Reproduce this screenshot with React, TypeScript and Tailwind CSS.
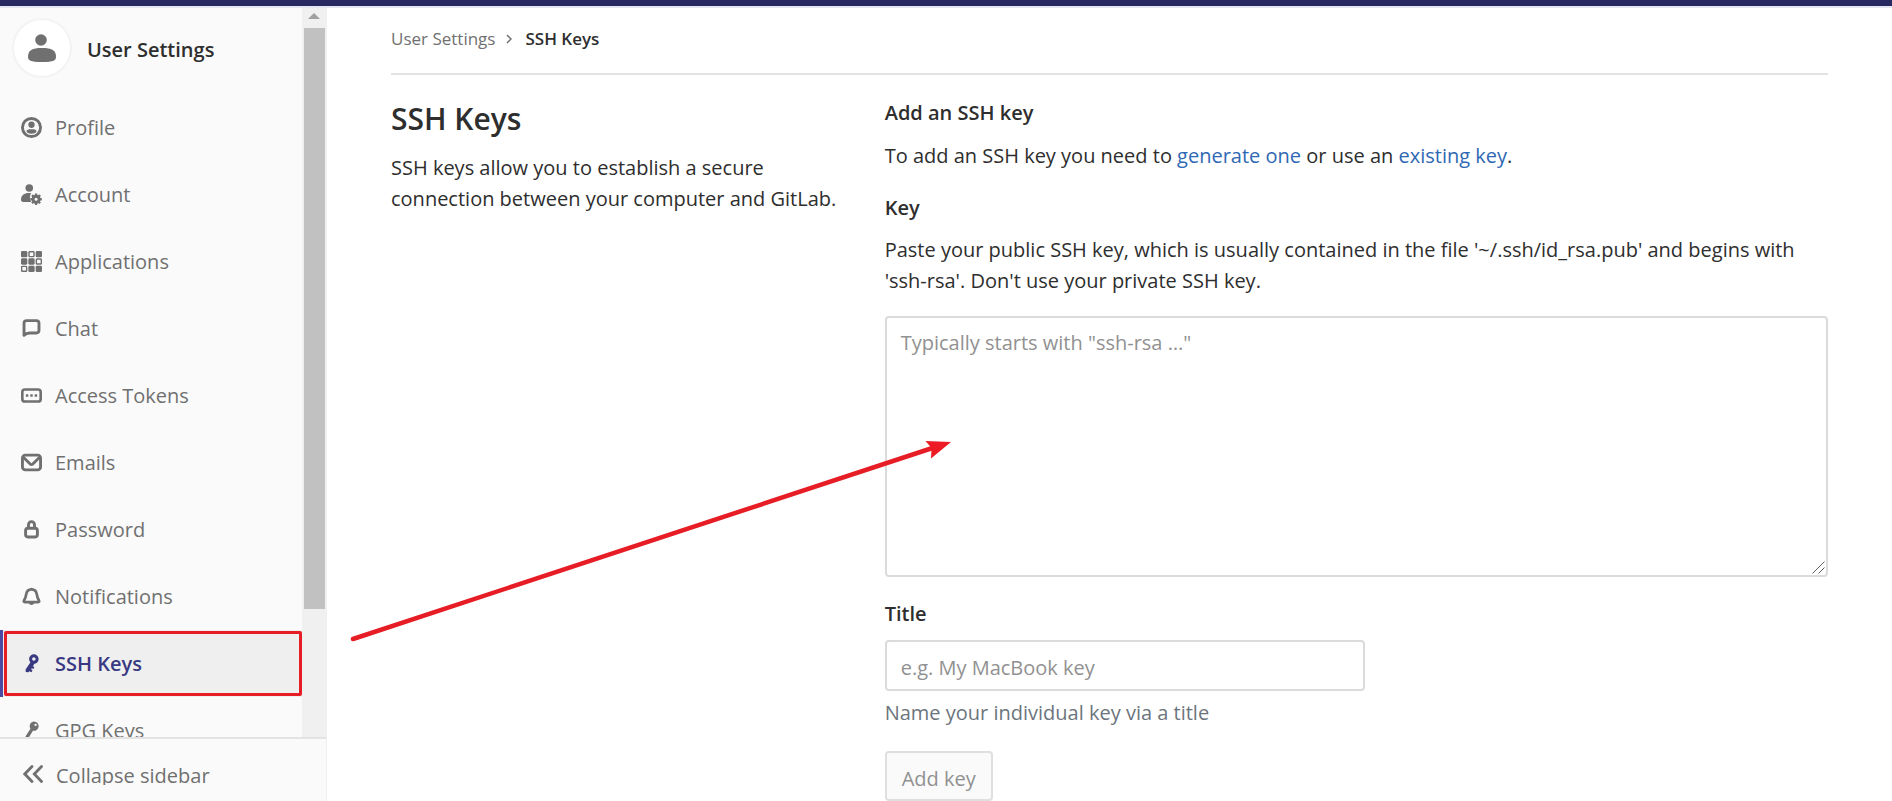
import type { ReactNode } from 'react';

function Icon({ children }: { children: ReactNode }) {
  return (
    <svg viewBox="0 0 16 16" className="size-[21px] shrink-0" fill="currentColor" aria-hidden="true">
      {children}
    </svg>
  );
}

const line = { fill: 'none', stroke: 'currentColor', strokeWidth: 2.2 } as const;

const profileIcon = (
  <Icon>
    <circle cx="8" cy="8" r="6.900" {...line} />
    <circle cx="8" cy="5.900" r="2.400" />
    <path d="M4.200 10.800C4.200 9.600 5.200 9.300 8 9.300s3.800.3 3.800 1.500S10.200 12.700 8 12.700s-3.800-.7-3.800-1.900z" />
  </Icon>
);

const cells = [
  [0, 0, true], [1, 0, false], [2, 0, true],
  [0, 1, true], [1, 1, true], [2, 1, false],
  [0, 2, false], [1, 2, true], [2, 2, true],
] as const;

const teeth = [0, 45, 90, 135, 180, 225, 270, 315];

const accountIcon = (
  <Icon>
    <circle cx="6.300" cy="3" r="2.900" />
    <path d="M7.700 6.900C6.600 9 6.400 11.200 7.800 13.700H2c-1.300 0-2-.6-2-1.700 0-3.300 2.400-5.100 6-5.100z" />
    <circle cx="11.500" cy="11.600" r="2.300" fill="none" stroke="currentColor" strokeWidth="2.200" />
    {teeth.map((angle) => (
      <rect key={angle} x="10.600" y="7.200" width="1.800" height="2" rx=".3" transform={`rotate(${angle} 11.500 11.600)`} />
    ))}
  </Icon>
);

const applicationsIcon = (
  <Icon>
    {cells.map(([col, row, solid]) =>
      solid ? (
        <rect key={`${col}${row}`} x={col * 5.6} y={row * 5.6} width="4.800" height="4.800" rx="1" />
      ) : (
        <rect key={`${col}${row}`} x={col * 5.6 + 0.5} y={row * 5.6 + 0.5} width="3.800" height="3.800" rx=".6" fill="none" stroke="currentColor" strokeWidth="1.100" />
      ),
    )}
  </Icon>
);

const chatIcon = (
  <Icon>
    <path d="M2.300 13.200V4a2 2 0 0 1 2-2h7.400a2 2 0 0 1 2 2v5.400a2 2 0 0 1-2 2H6.500C4.700 11.400 3.400 12 2.300 13.200z" {...line} strokeLinejoin="round" />
  </Icon>
);

const tokenIcon = (
  <Icon>
    <rect x="1" y="3.400" width="14" height="9.200" rx="2" {...line} strokeWidth={2} />
    <rect x="3.700" y="7.100" width="1.900" height="1.900" rx=".4" />
    <rect x="7.050" y="7.100" width="1.900" height="1.900" rx=".4" />
    <rect x="10.400" y="7.100" width="1.900" height="1.900" rx=".4" />
  </Icon>
);

const emailIcon = (
  <Icon>
    <rect x="1.100" y="2.400" width="13.800" height="11.200" rx="2.200" {...line} />
    <path d="M1.800 4l5.200 5.200c.6.600 1.400.6 2 0L14.200 4" {...line} />
  </Icon>
);

const lockIcon = (
  <Icon>
    <rect x="3.500" y="7" width="9" height="6.700" rx="1.800" {...line} />
    <path d="M5.700 7V4.300a2.300 2.300 0 0 1 4.600 0V7" {...line} />
  </Icon>
);

const bellIcon = (
  <Icon>
    <path d="M8 2.500c-2.400 0-3.700 1.400-4 3.700-.3 2.200-.8 3.500-1.700 4.900-.4.700-.1 1.100.6 1.100h10.200c.7 0 1-.4.6-1.100-.9-1.400-1.400-2.700-1.700-4.900-.3-2.300-1.600-3.700-4-3.700z" {...line} strokeWidth={2.100} strokeLinejoin="round" />
    <path d="M7 2.300a1 1 0 0 1 2 0zM5.900 13h4.200c-.3 1-1.100 1.500-2.100 1.500S6.200 14 5.900 13z" />
  </Icon>
);

const sshIcon = (
  <Icon>
    <circle cx="9.800" cy="4.600" r="2.500" {...line} strokeWidth={2.300} />
    <path d="M7.700 6.300l2.700 1.600-1.300 2.200 1.100.7-.8 1.300-1.200-.5-.5.900 1.100.7-.8 1.400-1.700-.7-.5.700-2.200-.1-.1-2z" />
  </Icon>
);

const gpgIcon = (
  <Icon>
    <path fillRule="evenodd" d="M9.900 1.200a3.500 3.500 0 1 1-.8 6.900l-3.800 6.300-2.100-.2.300-1.900 3.700-5.700a3.500 3.500 0 0 1 2.700-5.400zm1.200 1.600a.9.900 0 1 0 0 1.800.9.900 0 0 0 0-1.800z" />
  </Icon>
);

const items: { label: string; icon: ReactNode; active?: boolean }[] = [
  { label: 'Profile', icon: profileIcon },
  { label: 'Account', icon: accountIcon },
  { label: 'Applications', icon: applicationsIcon },
  { label: 'Chat', icon: chatIcon },
  { label: 'Access Tokens', icon: tokenIcon },
  { label: 'Emails', icon: emailIcon },
  { label: 'Password', icon: lockIcon },
  { label: 'Notifications', icon: bellIcon },
  { label: 'SSH Keys', icon: sshIcon, active: true },
  { label: 'GPG Keys', icon: gpgIcon },
];

function Sidebar() {
  return (
    <aside className="flex w-[327px] shrink-0 flex-col border-r border-[#f0f0f0] bg-[#fafafa] text-[#707070]">
      <div className="flex min-h-0 flex-1">
        <nav aria-label="User settings" className="min-w-0 flex-1 overflow-hidden">
          <a href="#settings" className="flex h-[86px] items-start gap-[15px] pt-[10px] pl-3 font-semibold text-[#2e2e2e]">
            <span className="flex size-[60px] items-center justify-center rounded-full border-2 border-[#f3f3f3] bg-white text-[#707070]">
              <svg viewBox="0 0 28 28" className="size-7" fill="currentColor" aria-hidden="true">
                <circle cx="13" cy="6" r="5.800" />
                <path d="M0 22.500C0 16.500 4 14 14 14s14 2.500 14 8.500C28 26.500 26 28 14 28S0 26.500 0 22.500z" />
              </svg>
            </span>
            <span className="pt-4">User Settings</span>
          </a>
          <ul>
            {items.map(({ label, icon, active }) => (
              <li key={label} className="relative">
                <a
                  href={`#${label.toLowerCase().replace(' ', '-')}`}
                  aria-current={active ? 'page' : undefined}
                  className={
                    active
                      ? 'flex h-[67px] items-center gap-[13px] border-l-[3px] border-[#4b4ba3] bg-[#efefef] pl-[18px] font-semibold text-[#393982]'
                      : 'flex h-[67px] items-center gap-[13px] pl-[21px]'
                  }
                >
                  {icon}
                  <span>{label}</span>
                </a>
                {active && (
                  <span className="pointer-events-none absolute inset-y-px right-0 left-1 rounded-xs border-3 border-[#e71d25]" />
                )}
              </li>
            ))}
          </ul>
        </nav>
        <div className="flex w-6 flex-col items-center bg-[#f0f0f0]" aria-hidden="true">
          <svg viewBox="0 0 12 6" className="mt-[5px] mb-[9px] h-[6px] w-3" fill="#a0a0a0">
            <path d="M6 0l6 6H0z" />
          </svg>
          <div className="h-[581px] w-[21px] bg-[#c1c1c1]" />
        </div>
      </div>
      <button type="button" className="flex h-16 items-start gap-[13px] border-t-2 border-[#e3e3e3] pt-[21px] pl-[23px] text-left">
        <svg viewBox="0 0 20 18" className="mt-[5px] h-[18px] w-5" fill="none" stroke="currentColor" strokeWidth="2.800" aria-hidden="true" strokeLinecap="round">
          <path d="M9 1.500L1.800 9 9 16.500M18.500 1.500L11.300 9l7.200 7.500" />
        </svg>
        <span className="h-[25px] overflow-hidden">Collapse sidebar</span>
      </button>
    </aside>
  );
}

function KeyForm() {
  return (
    <form className="flex flex-col items-start">
      <h2 className="font-semibold">Add an SSH key</h2>
      <p className="mt-3">
        To add an SSH key you need to <a href="#generate" className="text-[#2f68b4]">generate one</a> or use an{' '}
        <a href="#existing" className="text-[#2f68b4]">existing key</a>.
      </p>
      <label htmlFor="key" className="mt-[21px] font-semibold">Key</label>
      <p className="mt-[11px]">
        Paste your public SSH key, which is usually contained in the file '~/.ssh/id_rsa.pub' and begins with 'ssh-rsa'. Don't use your private SSH key.
      </p>
      <div className="relative mt-5 w-full">
        <textarea
          id="key"
          placeholder={'Typically starts with "ssh-rsa …"'}
          className="block h-[261px] w-full resize-none rounded border-2 border-[#dbdbdb] bg-white px-[14px] py-[9px] placeholder:text-[#919191]"
        />
        <svg viewBox="0 0 13 13" className="pointer-events-none absolute right-[3px] bottom-[3px] size-[13px]" stroke="#5f5f5f" aria-hidden="true">
          <path d="M.5 12.500l12-12M6.500 12.500l6-6" />
        </svg>
      </div>
      <label htmlFor="title" className="mt-[21px] font-semibold">Title</label>
      <input
        id="title"
        type="text"
        placeholder="e.g. My MacBook key"
        className="mt-[11px] h-[51px] w-[480px] rounded border-2 border-[#dbdbdb] bg-white px-[14px] pt-1 placeholder:text-[#919191]"
      />
      <p className="mt-[6px] text-[#6c757d]">Name your individual key via a title</p>
      <button type="submit" disabled className="mt-[23px] h-[50px] rounded border-2 border-[#dfdfdf] bg-[#fafafa] px-[15px] pt-1 text-[#919191]">
        Add key
      </button>
    </form>
  );
}

export default function App() {
  return (
    <div className="relative flex h-screen flex-col overflow-hidden bg-white font-['Open_Sans','Noto_Sans',sans-serif] text-[20px] leading-[31px] text-[#2e2e2e]">
      <header className="h-2 shrink-0 border-b-2 border-[#e6e5f3] bg-[#292961]" />
      <div className="flex min-h-0 flex-1">
        <Sidebar />
        <main className="min-w-0 flex-1 px-16">
          <nav aria-label="Breadcrumb" className="flex h-[67px] items-center gap-[11px] border-b-2 border-[#e3e3e3] pb-1 text-[17px]">
            <a href="#settings" className="text-[#707070]">User Settings</a>
            <svg viewBox="0 0 6 10" className="h-[10px] w-[6px]" fill="none" stroke="#707070" strokeWidth="1.500" aria-hidden="true">
              <path d="M1 1l4 4-4 4" />
            </svg>
            <a href="#ssh-keys" className="ml-0.5 font-semibold">SSH Keys</a>
          </nav>
          <div className="-mx-[22px] flex">
            <section className="w-1/3 px-[22px] pt-6">
              <h1 className="text-[30px] leading-10 font-semibold">SSH Keys</h1>
              <p className="mt-[13px]">SSH keys allow you to establish a secure connection between your computer and GitLab.</p>
            </section>
            <section className="w-2/3 px-[22px] pt-[22px]">
              <KeyForm />
            </section>
          </div>
        </main>
      </div>
      <svg viewBox="0 0 604 202" className="pointer-events-none absolute top-[440px] left-[350px] h-[202px] w-[604px]" aria-hidden="true">
        <path d="M3 199L584 7.500" stroke="#e71d25" strokeWidth="4.500" strokeLinecap="round" />
        <path d="M601 2L575.500 1l6 7-.5 10.500z" fill="#ed1c24" />
      </svg>
    </div>
  );
}
